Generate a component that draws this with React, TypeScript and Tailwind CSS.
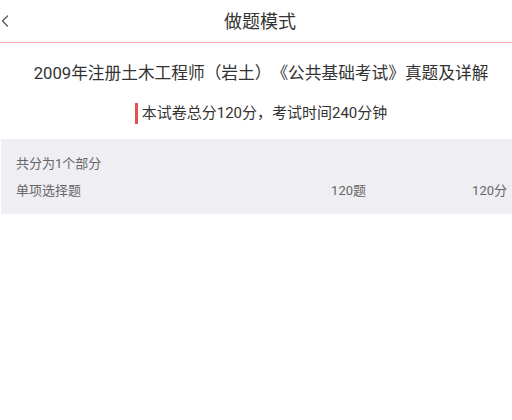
import { ChevronLeft } from 'lucide-react';

export default function App() {
    return (
        <div className="w-[512px] h-[420px] bg-white [text-spacing-trim:space-all]" style={{ fontFamily: "Roboto, 'Noto Sans CJK SC', sans-serif" }}>
            <div className="relative h-[43px] border-b border-[#f6aaaa] flex items-center justify-center pl-[8px]">
                <ChevronLeft className="absolute left-[-5px] top-[11px] w-[20px] h-[20px] text-[#555]" strokeWidth={1.5} />
                <span className="text-[18px] text-[#333]">做题模式</span>
            </div>

            <div className="pt-[20px] pl-[10px] text-center text-[16.7px] leading-[22px] text-[#333]">
                2009年注册土木工程师（岩土）《公共基础考试》真题及详解
            </div>

            <div className="mt-[18px] pl-[10px] flex justify-center">
                <div className="flex items-center">
                    <span className="w-[3px] h-[21px] bg-[#e05252] mr-[4px]" />
                    <span className="text-[15px] leading-[21px] text-[#333]">本试卷总分120分，考试时间240分钟</span>
                </div>
            </div>

            <div className="mt-[15px] ml-[1px] h-[75px] bg-[#efeef3] pl-[15px] pr-[5px] pt-[16px] text-[13px] text-[#666]">
                <div className="leading-[18px]">共分为1个部分</div>
                <div className="mt-[9px] flex leading-[18px]">
                    <span className="flex-1">单项选择题</span>
                    <span>120题</span>
                    <span className="w-[141px] text-right">120分</span>
                </div>
            </div>
        </div>
    );
}
